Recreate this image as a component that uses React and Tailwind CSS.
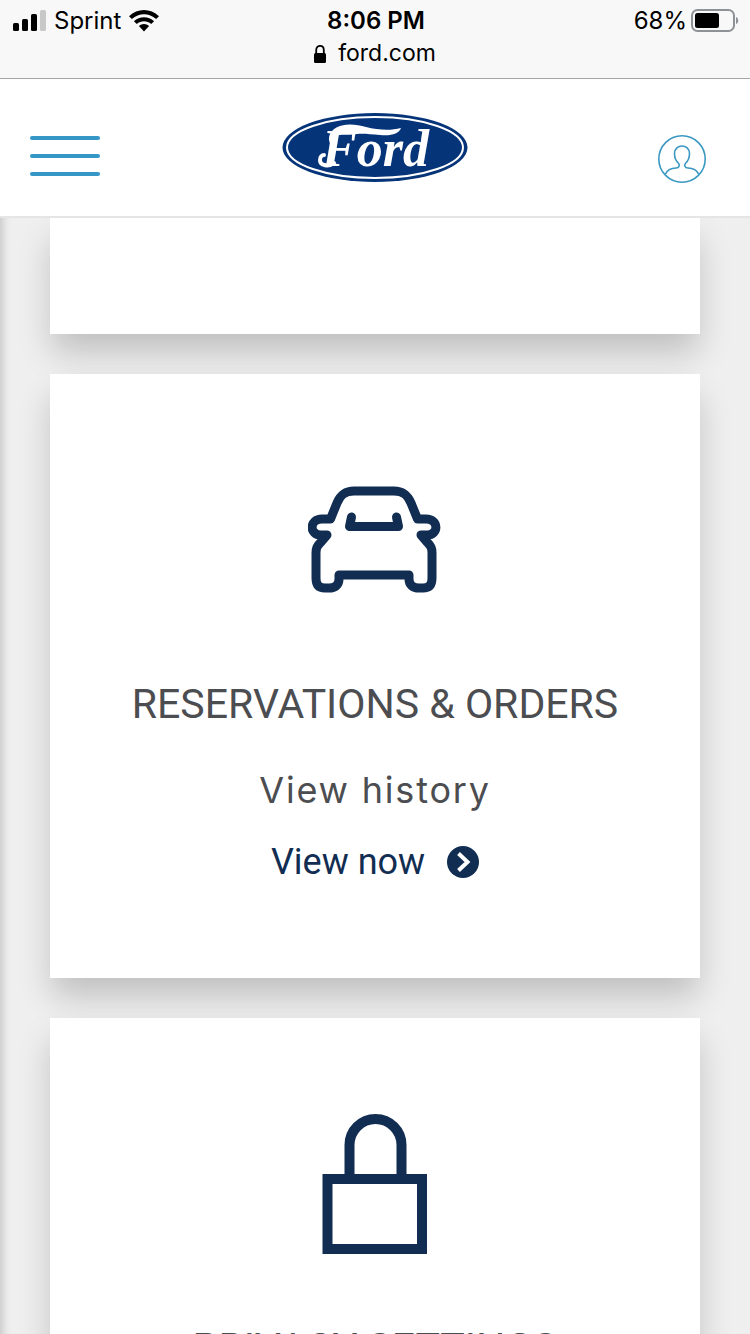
import React from 'react';

function Signal() {
  return (
    <svg className="w-[33px] h-[21px]" viewBox="0 0 33 21" aria-hidden="true">
      <rect x="0" y="13" width="6" height="8" rx="1.5" />
      <rect x="9" y="9" width="6" height="12" rx="1.5" />
      <rect x="18" y="4" width="6" height="17" rx="1.5" />
      <rect x="27" y="0" width="6" height="21" rx="1.5" fill="#c8c8c8" />
    </svg>
  );
}

function Wifi() {
  return (
    <svg className="w-[30px] h-[22px]" viewBox="0 0 30 22" aria-hidden="true">
      <path d="M0 6.2C8.5-2 21.5-2 30 6.2L27.1 9.1C20.2 2.7 9.8 2.7 2.9 9.1Z" />
      <path d="M4.9 11.2C10.6 5.8 19.4 5.8 25.1 11.2L22.2 14C18.2 10.2 11.8 10.2 7.8 14Z" />
      <path d="M9.9 16.1C12.8 13.4 17.2 13.4 20.1 16.1L15 21.5Z" />
    </svg>
  );
}

function Battery() {
  return (
    <svg className="w-12 h-6" viewBox="0 0 48 24" aria-hidden="true">
      <rect x="1" y="1" width="42" height="21" rx="5.5" fill="none" stroke="#8e9196" strokeWidth="2" />
      <rect x="4" y="4" width="24" height="15" rx="2.5" />
      <path d="M45 8C48 9 48 14 45 15Z" fill="#8e9196" />
    </svg>
  );
}

function FordLogo() {
  return (
    <svg className="w-[186px] h-[70px]" viewBox="0 0 186 70" role="img" aria-label="Ford">
      <ellipse cx="93" cy="34.5" rx="92.5" ry="34.5" fill="#063479" />
      <ellipse cx="93" cy="34.5" rx="88" ry="30.5" fill="none" stroke="#fff" strokeWidth="2" />
      <text
        x="40"
        y="53"
        fill="#fff"
        className="font-['Liberation_Serif',serif] font-bold italic text-[52px]"
      >
        Ford
      </text>
      {/* swash over the F and its curled foot */}
      <path
        d="M49 32C44 24 49 15 60 12.500C68 10.500 76 12 84 14C96 17 108 18 119 15C117 21 109 23 98 22C86 21 80 20 70 21.500C60 22 53 21 52 26C51.500 29 53 32 49 32Z"
        fill="#fff"
      />
      <path d="M52 50C47 54 38 53 38 47C38 44 40 42 42 42" fill="none" stroke="#fff" strokeWidth="4" strokeLinecap="round" />
    </svg>
  );
}

function UserIcon() {
  return (
    <svg className="w-12 h-12" viewBox="0 0 48 48" fill="none" stroke="#3a98c2" strokeWidth="1.6" aria-hidden="true">
      <circle cx="24" cy="24" r="23.2" />
      <path d="M7.5 39C9.5 34.5 13 33.2 18 33C21.5 32.8 22 30 20.3 28C17.5 25.5 16.5 23 16.5 18.5C16.5 8.5 31.5 8.5 31.5 18.5C31.5 23 30.5 25.5 27.7 28C26 30 26.5 32.8 30 33C35 33.2 38.5 34.5 40.5 39" />
    </svg>
  );
}

function CarIcon() {
  return (
    <svg
      className="w-[134px] h-[108px]"
      viewBox="1 0 134 108"
      fill="none"
      stroke="#122d52"
      strokeWidth="9"
      strokeLinejoin="round"
      strokeLinecap="round"
      aria-hidden="true"
    >
      <path d="M67 5H47C37 5 33 10 30 17L23.5 33H15C2 33 2 49 14 49H20L14 56C10 60 9 62 9 67V92C9 99 12 102 18 102H22C28 102 32 99 32 93V89H102V93C102 99 106 102 112 102H116C122 102 125 99 125 92V67C125 62 124 60 120 56L114 49H120C132 49 132 33 119 33H110.5L104 17C101 10 97 5 87 5Z" />
      <path d="M44.5 31L42.5 40.5H91.5L89.5 31" />
    </svg>
  );
}

function PadlockIcon() {
  return (
    <svg className="w-[106px] h-[140px]" viewBox="0 0 106 140" fill="none" stroke="#122d52" strokeWidth="10" aria-hidden="true">
      <path d="M27.5 62V31A26 26 0 0 1 79.5 31V62" />
      <rect x="5.5" y="65" width="94.5" height="70" />
    </svg>
  );
}

function Card({ icon, title, text, link }) {
  return (
    <section className="shrink-0 h-[604px] bg-white flex flex-col items-center text-center shadow-[0_20px_32px_-2px_rgba(0,0,0,0.2)]">
      <div className="h-[300px] pt-8 flex items-center justify-center">{icon}</div>
      <h2 className="font-['Roboto',sans-serif] text-[41px] leading-[60px] text-[#4c4d50] whitespace-nowrap">{title}</h2>
      {text && (
        <p className="mt-8 font-['Inter',sans-serif] text-[36px] leading-[48px] tracking-wider text-[#4c4d50]">{text}</p>
      )}
      {link && (
        <a href="#" className="mt-6 flex items-center gap-[22px] font-['Roboto',sans-serif] text-[36px] leading-[48px] text-[#122d52]">
          {link}
          <svg className="w-8 h-8" viewBox="0 0 32 32" aria-hidden="true">
            <circle cx="16" cy="16" r="16" fill="#122d52" />
            <path d="M11.5 7.5L20.5 16L11.5 24.5" fill="none" stroke="#fff" strokeWidth="4" />
          </svg>
        </a>
      )}
    </section>
  );
}

export default function App() {
  return (
    <div className="h-screen flex flex-col overflow-hidden bg-[#efefef] text-black">
      <div className="shrink-0 h-[79px] bg-[#f8f8f8] border-b border-[#a5a5a8] font-['Inter',sans-serif] text-[24px] leading-[33px] pt-1">
        <div className="grid grid-cols-3 items-center pl-[13px] pr-[11px]">
          <div className="flex items-center gap-2">
            <Signal />
            <span>Sprint</span>
            <Wifi />
          </div>
          <div className="text-center font-semibold">8:06 PM</div>
          <div className="flex items-center justify-end gap-1">
            <span>68%</span>
            <Battery />
          </div>
        </div>
        <div className="flex items-center justify-center gap-3 text-[23px]">
          <svg className="w-3 h-5" viewBox="0 0 12 20" aria-hidden="true">
            <rect x="0" y="9" width="12" height="10" rx="1.5" />
            <path d="M2.2 10V6C2.2 0.5 9.8 0.5 9.8 6V10" fill="none" stroke="#000" strokeWidth="1.8" />
          </svg>
          <span>ford.com</span>
        </div>
      </div>

      <header className="shrink-0 h-[139px] bg-white border-b-2 border-[#e5e5e5] grid grid-cols-3 items-center px-[30px]">
        <button type="button" aria-label="Menu" className="w-[70px] flex flex-col gap-[14px] mt-4">
          <span className="h-1 w-full rounded-full bg-[#3597c5]" />
          <span className="h-1 w-full rounded-full bg-[#3597c5]" />
          <span className="h-1 w-full rounded-full bg-[#3597c5]" />
        </button>
        <a href="#" className="justify-self-center">
          <FordLogo />
        </a>
        <button type="button" aria-label="Account" className="justify-self-end mt-[22px] mr-[14px]">
          <UserIcon />
        </button>
      </header>

      <main className="flex-1 min-h-0 overflow-hidden flex flex-col gap-10 px-[50px] shadow-[inset_10px_0_10px_-8px_rgba(0,0,0,0.2)]">
        <section className="shrink-0 h-[116px] bg-white shadow-[0_20px_32px_-2px_rgba(0,0,0,0.2)]" />
        <Card icon={<CarIcon />} title="RESERVATIONS & ORDERS" text="View history" link="View now" />
        <Card icon={<PadlockIcon />} title="PRIVACY SETTINGS" />
      </main>
    </div>
  );
}
